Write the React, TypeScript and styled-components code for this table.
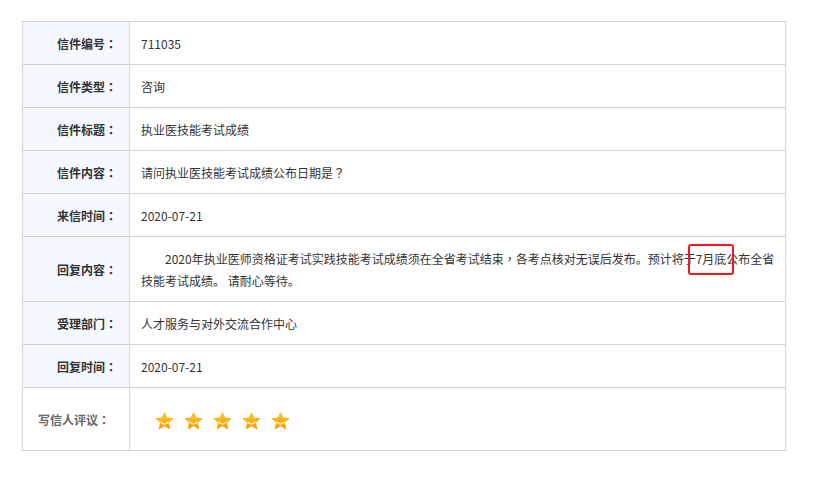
import React from "react";
import styled, { createGlobalStyle } from "styled-components";

const Global = createGlobalStyle`
  html, body { margin: 0; padding: 0; background: #fff; }
  body {
    font-family: "Microsoft YaHei", "Noto Sans CJK SC", "Noto Sans", sans-serif;
    font-size: 12px;
    color: #333;
  }
`;

const Page = styled.div`
  padding: 21px 28px 36px 22px;
`;

const Grid = styled.div`
  display: grid;
  grid-template-columns: 107px 1fr;
  border-top: 1px solid #d3d3d3;
  border-left: 1px solid #d3d3d3;
`;

const Label = styled.div<{ $plain?: boolean; $h: number }>`
  box-sizing: border-box;
  height: ${(p) => p.$h}px;
  display: flex;
  align-items: center;
  justify-content: ${(p) => (p.$plain ? "center" : "flex-end")};
  padding-right: ${(p) => (p.$plain ? "4px" : "12px")};
  background: ${(p) => (p.$plain ? "#fff" : "#f5f9ff")};
  border-right: 1px solid #d3d3d3;
  border-bottom: 1px solid #d3d3d3;
  font-weight: bold;
  color: ${(p) => (p.$plain ? "#666" : "#333")};
  white-space: nowrap;
`;

const Punct = styled.span`
  font-family: "Noto Sans CJK TC", "Noto Sans CJK SC", sans-serif;
`;

const Value = styled.div<{ $h: number }>`
  box-sizing: border-box;
  height: ${(p) => p.$h}px;
  display: flex;
  align-items: center;
  padding: 0 10px 0 11px;
  border-right: 1px solid #d3d3d3;
  border-bottom: 1px solid #d3d3d3;
  color: #333;
`;

const Para = styled.p`
  margin: 0;
  padding-top: 2px;
  line-height: 22px;
  text-indent: 24px;
  white-space: nowrap;
`;

const Marked = styled.span`
  position: relative;
  &::after {
    content: "";
    position: absolute;
    left: -8px;
    right: -8px;
    top: -6px;
    bottom: -8px;
    border: 2px solid #f5181b;
    border-radius: 3px;
  }
`;

const Stars = styled.div`
  display: flex;
  gap: 10px;
  padding-left: 14px;
  padding-top: 4px;
`;

const Star = () => (
  <svg width="19" height="18" viewBox="0 0 19 18">
    <defs>
      <linearGradient id="sg" x1="0" y1="0" x2="0" y2="1">
        <stop offset="0" stopColor="#ffd21c" />
        <stop offset="0.55" stopColor="#ffae0c" />
        <stop offset="1" stopColor="#ff8a00" />
      </linearGradient>
    </defs>
    <path
      d="M9.5 0.8 L12 6.2 L18 6.6 L13.4 10.6 L15 17 L9.5 13.8 L4 17 L5.6 10.6 L1 6.6 L7 6.2 Z"
      fill="url(#sg)"
      stroke="#ffa800"
      strokeWidth="0.8"
      strokeLinejoin="round"
    />
    <path d="M6 10.2 Q9.5 13.6 13 10.2" fill="none" stroke="#fff3c0" strokeWidth="1.4" strokeLinecap="round" />
  </svg>
);

const Colon = () => <Punct>：</Punct>;

const rows: [string, React.ReactNode][] = [
  ["信件编号", "711035"],
  ["信件类型", "咨询"],
  ["信件标题", "执业医技能考试成绩"],
  ["信件内容", <>请问执业医技能考试成绩公布日期是<Punct>？</Punct></>],
  ["来信时间", "2020-07-21"],
];

export default function App() {
  return (
    <>
      <Global />
      <Page>
        <Grid>
          {rows.map(([l, v]) => (
            <React.Fragment key={l}>
              <Label $h={43}>{l}<Colon /></Label>
              <Value $h={43}>{v}</Value>
            </React.Fragment>
          ))}
          <Label $h={65}>回复内容<Colon /></Label>
          <Value $h={65}>
            <Para>
              2020年执业医师资格证考试实践技能考试成绩须在全省考试结束<Punct>，</Punct>各考点核对无误后发布。预计将于<Marked>7月底</Marked>公布全省
              <br />
              技能考试成绩。 请耐心等待。
            </Para>
          </Value>
          <Label $h={43}>受理部门<Colon /></Label>
          <Value $h={43}>人才服务与对外交流合作中心</Value>
          <Label $h={43}>回复时间<Colon /></Label>
          <Value $h={43}>2020-07-21</Value>
          <Label $plain $h={63}>写信人评议<Colon /></Label>
          <Value $h={63}>
            <Stars>
              <Star />
              <Star />
              <Star />
              <Star />
              <Star />
            </Stars>
          </Value>
        </Grid>
      </Page>
    </>
  );
}
